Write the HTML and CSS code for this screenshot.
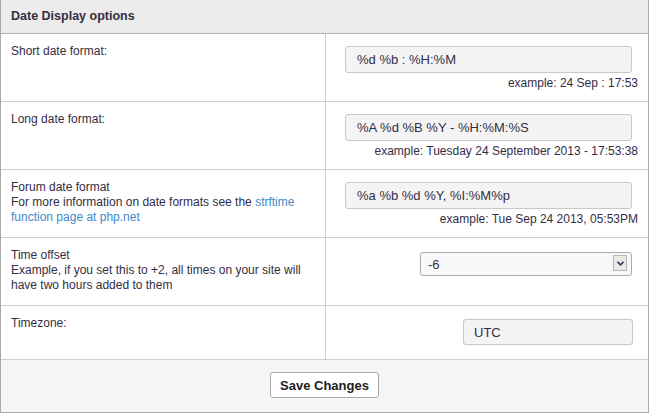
FILE: index.html
```html
<!DOCTYPE html>
<html lang="en">

<head>
  <meta charset="UTF-8" />
  <meta name="viewport" content="width=device-width, initial-scale=1.0" />
  <title>Date Display options</title>
  <link rel="stylesheet" href="styles.css">
</head>

<body>

  <form class="panel">
    <div class="panelHeader">Date Display options</div>

    <!-- Short date -->
    <div class="fila">
      <div class="etiqueta">Short date format:</div>
      <div class="campo">
        <input type="text" class="texto" value="%d %b : %H:%M" />
        <span class="ejemplo">example: 24 Sep : 17:53</span>
      </div>
    </div>

    <!-- Long date -->
    <div class="fila">
      <div class="etiqueta">Long date format:</div>
      <div class="campo">
        <input type="text" class="texto" value="%A %d %B %Y - %H:%M:%S" />
        <span class="ejemplo">example: Tuesday 24 September 2013 - 17:53:38</span>
      </div>
    </div>

    <!-- Forum date -->
    <div class="fila">
      <div class="etiqueta">
        Forum date format<br>
        For more information on date formats see the <a href="#">strftime function page at php.net</a>
      </div>
      <div class="campo">
        <input type="text" class="texto" value="%a %b %d %Y, %I:%M%p" />
        <span class="ejemplo">example: Tue Sep 24 2013, 05:53PM</span>
      </div>
    </div>

    <!-- Time offset -->
    <div class="fila">
      <div class="etiqueta">
        Time offset<br>
        Example, if you set this to +2, all times on your site will have two hours added to them
      </div>
      <div class="campo campoSelect">
        <span class="selectWrap">
          <select class="selector">
            <option>-6</option>
          </select>
          <span class="flecha">
            <svg width="7" height="5" viewBox="0 0 7 5"><path d="M0.5 0.8 L3.5 3.8 L6.5 0.8" fill="none" stroke="#45365a" stroke-width="1.6"/></svg>
          </span>
        </span>
      </div>
    </div>

    <!-- Timezone -->
    <div class="fila filaCorta">
      <div class="etiqueta">Timezone:</div>
      <div class="campo campoZona">
        <input type="text" class="texto zona" value="UTC" />
      </div>
    </div>

    <div class="pie">
      <button type="button" class="boton">Save Changes</button>
    </div>
  </form>

</body>

</html>
```

FILE: styles.css
```css
* {
  box-sizing: border-box;
}

body {
  margin: 0;
  font-family: "Liberation Sans", Arial, sans-serif;
  color: #333;
  background: #fff;
}

.panel {
  width: 649px;
  border: 1px solid #aaa;
  border-top: none;
  margin: 0;
}

.panelHeader {
  height: 34px;
  line-height: 33px;
  padding-left: 10px;
  background-color: #ececec;
  border-bottom: 1px solid #b4b4b4;
  font-weight: bold;
  font-size: 12.5px;
  color: #352d44;
}

.fila {
  display: grid;
  grid-template-columns: 325px 1fr;
  min-height: 68px;
  border-bottom: 1px solid #cfcfcf;
}

.fila:first-of-type {
  min-height: 69px;
}

.filaCorta {
  min-height: 54px;
}

.etiqueta {
  border-right: 1px solid #cfcfcf;
  padding: 10px 20px 10px 10px;
  font-size: 12px;
  line-height: 15px;
  color: #352d44;
}

.etiqueta a {
  color: #4189c9;
  text-decoration: none;
}

.campo {
  padding: 12px 10px 10px 10px;
  text-align: right;
}

.texto {
  display: inline-block;
  width: 287px;
  height: 27px;
  margin-right: 6px;
  padding: 0 11px;
  border: 1px solid #c8c8c8;
  border-radius: 3px;
  background-color: #f4f4f4;
  font-family: "Liberation Sans", Arial, sans-serif;
  font-size: 13px;
  color: #352d44;
  outline: none;
}

.ejemplo {
  display: block;
  margin-top: 3px;
  font-size: 12px;
  line-height: 15px;
  color: #352d44;
}

.campoSelect {
  padding-top: 14px;
}

.selectWrap {
  position: relative;
  display: inline-block;
  margin-right: 6px;
  vertical-align: top;
}

.selector {
  appearance: none;
  -webkit-appearance: none;
  display: block;
  width: 212px;
  height: 24px;
  padding: 0 7px;
  border: 1px solid #aaa;
  border-radius: 3px;
  background-color: #f8f8f8;
  font-family: "Liberation Sans", Arial, sans-serif;
  font-size: 13px;
  color: #352d44;
}

.flecha {
  position: absolute;
  top: 3px;
  right: 5px;
  width: 14px;
  height: 16px;
  border: 1px solid #b8b8b8;
  background-color: #e9e9e9;
  display: flex;
  align-items: center;
  justify-content: center;
  pointer-events: none;
}

.campoZona {
  padding-top: 13px;
}

.zona {
  width: 170px;
  height: 26px;
  padding: 0 10px;
  margin-right: 5px;
}

.pie {
  height: 52px;
  padding-top: 12px;
  background-color: #f4f6f6;
  text-align: center;
}

.boton {
  width: 109px;
  height: 26px;
  border: 1px solid #aaa;
  border-radius: 3px;
  background-color: #fff;
  font-family: "Liberation Sans", Arial, sans-serif;
  font-weight: bold;
  font-size: 13px;
  color: #222;
  cursor: pointer;
}
```
